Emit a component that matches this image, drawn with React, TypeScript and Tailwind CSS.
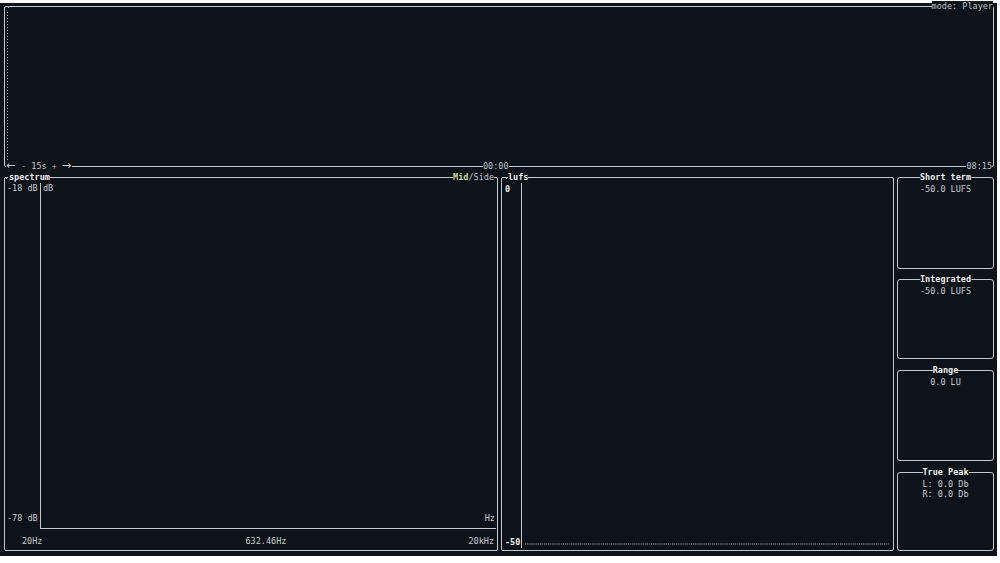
import React from "react";

function Box({ title, lines, className }: { title: string; lines: string[]; className: string }) {
  return (
    <div className={"relative border border-[#c3c6cb] rounded-[3px] pt-[5.5px] text-center " + className}>
      <span className="absolute -top-[6px] left-1/2 -translate-x-1/2 bg-[#0e1219] font-bold text-[#ededed] whitespace-pre">
        {title}
      </span>
      {lines.map((l) => (
        <div key={l} className="whitespace-pre">
          {l}
        </div>
      ))}
    </div>
  );
}

function Tick({ className }: { className: string }) {
  return <div className={"absolute w-px h-[2px] bg-[#a9adb3] " + className} />;
}

export default function App() {
  return (
    <div className="w-[1000px] h-[563px] bg-white pt-[3px] overflow-hidden">
      <div className="w-[997px] h-[553px] bg-[#0e1219] text-[#c8cacd] text-[8.5px] leading-[10.7px] font-['DejaVu_Sans_Mono',monospace] pt-[3px] flex flex-col">
        {/* top panel */}
        <div className="relative ml-[4px] w-[990px] h-[161px] border border-[#c3c6cb] rounded-[2px] pl-[1px] pt-[5px]">
          <Tick className="left-[3px] -top-[1px]" />
          <span className="absolute right-0 -top-[6px] bg-[#0e1219] text-[#bfc2c6] whitespace-pre">mode: Player</span>
          <svg width="3" height="150" className="block">
            <line x1="1.5" y1="0" x2="1.5" y2="150" stroke="#a6aab0" strokeWidth="1" strokeDasharray="1 2" />
          </svg>
          <span className="absolute left-[1px] -bottom-[6px] bg-[#0e1219] flex items-center whitespace-pre text-[#c8cacd]">
            <span className="w-[10px] text-[11px] leading-[10.7px] font-['DejaVu_Sans',sans-serif]">←</span>
            <span className="text-[#9a9ea4]"> - </span>
            <span>15s</span>
            <span className="text-[#9a9ea4]"> + </span>
            <span className="w-[10px] text-[11px] leading-[10.7px] font-['DejaVu_Sans',sans-serif]">→</span>
          </span>
          <span className="absolute left-[478px] -bottom-[6px] bg-[#0e1219] text-[#bfc2c6]">00:00</span>
          <span className="absolute right-[1px] -bottom-[6px] bg-[#0e1219] text-[#bfc2c6]">08:15</span>
        </div>

        {/* bottom section */}
        <div className="flex ml-[4px] mt-[10px] h-[374px] gap-[3px]">
          {/* spectrum */}
          <div className="relative w-[494px] h-full border border-[#c3c6cb] rounded-[2px] flex flex-col">
            <span className="absolute left-[3px] -top-[6px] bg-[#0e1219] pl-px font-bold text-[#ededed]">spectrum</span>
            <Tick className="left-[1px] -top-[1px]" />
            <span className="absolute right-[3px] -top-[6px] bg-[#0e1219] whitespace-pre">
              <span className="font-bold text-[#cdd59c]">Mid</span>
              <span className="text-[#bfc2c6]">/Side</span>
            </span>
            <div className="flex mt-[5px] h-[346px]">
              <div className="w-[35px] pl-[2px] pb-[5.5px] flex flex-col justify-between whitespace-pre">
                <span>-18 dB</span>
                <span>-78 dB</span>
              </div>
              <div className="flex-1 mr-[1px] border-l border-b border-[#c3c6cb] flex flex-col justify-between pl-[2px] pr-[1px] pb-[4.5px]">
                <span>dB</span>
                <span className="self-end">Hz</span>
              </div>
            </div>
            <div className="flex pt-[6.6px] whitespace-pre">
              <span className="ml-[17px]">20Hz</span>
              <span className="ml-[203px]">632.46Hz</span>
              <span className="ml-auto mr-[3px]">20kHz</span>
            </div>
          </div>

          {/* lufs */}
          <div className="relative w-[393px] h-full border border-[#c3c6cb] rounded-[2px] flex">
            <span className="absolute left-[6px] -top-[6px] bg-[#0e1219] font-bold text-[#ededed]">lufs</span>
            <Tick className="left-[4px] -top-[1px]" />
            <div className="w-[19px] pl-[3px] pt-[5.5px] pb-[2.5px] flex flex-col justify-between font-bold text-[#ededed]">
              <span>0</span>
              <span>-50</span>
            </div>
            <div className="w-px bg-[#c3c6cb] mt-[5px] mb-[2px]" />
            <div className="flex-1 flex flex-col justify-end pl-[3px] pr-[4px] pb-[5px]">
              <svg width="100%" height="2" className="block">
                <line x1="0" y1="1" x2="100%" y2="1" stroke="#a6aab0" strokeWidth="1.2" strokeDasharray="1.2 0.9" />
              </svg>
            </div>
          </div>

          {/* right column */}
          <div className="w-[97px] h-full flex flex-col">
            <Box title="Short term" lines={["-50.0 LUFS"]} className="h-[92px]" />
            <Box title="Integrated" lines={["-50.0 LUFS"]} className="h-[80px] mt-[10px]" />
            <Box title="Range" lines={["0.0 LU"]} className="h-[91px] mt-[11px]" />
            <Box title="True Peak" lines={["L: 0.0 Db", "R: 0.0 Db"]} className="h-[79px] mt-[11px]" />
          </div>
        </div>
      </div>
    </div>
  );
}
